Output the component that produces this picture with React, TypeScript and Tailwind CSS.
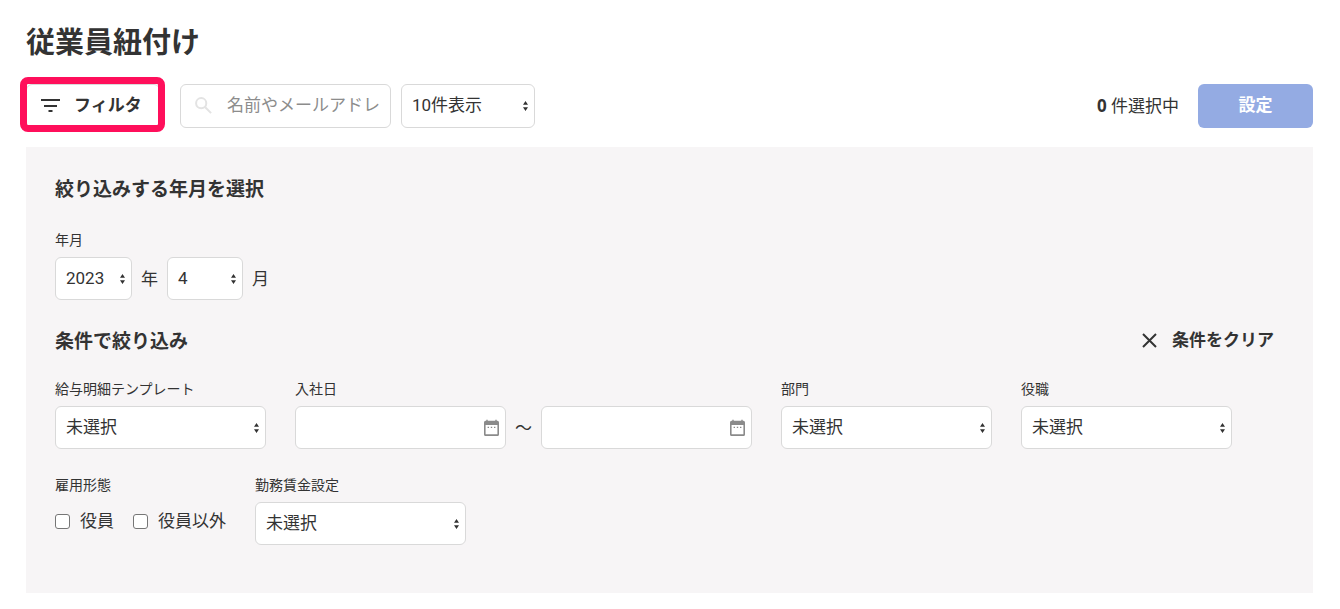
import { useState } from 'react';
import type { ReactNode } from 'react';
import clsx from 'clsx';

const controlClass = 'w-full rounded-md border border-[#d9d9d9] bg-white pb-0.5 text-[17px] text-[#333333]';

export default function App() {
  const [keyword, setKeyword] = useState('');

  return (
    <main className="pt-[25px] pr-[27px] pb-4 pl-[26px] font-['Roboto','Noto_Sans_CJK_JP',sans-serif] text-[17px] leading-6 text-[#333333]">
      <h1 className="text-[29px] leading-9 font-bold">従業員紐付け</h1>

      <div className="mt-[23px] flex items-center">
        <button
          type="button"
          className="relative flex h-11 w-[134px] items-center gap-3 rounded-md border border-[#d9d9d9] bg-white pb-0.5 pl-[11px] font-bold"
        >
          <FilterIcon />
          フィルタ
          {/* 強調枠 */}
          <span className="absolute -top-2 -right-1.5 -bottom-[5px] -left-[7px] rounded-lg border-[7px] border-[#ff0f5b]" />
        </button>

        <div className="relative ml-5 w-[211px]">
          <SearchIcon />
          <input
            type="text"
            aria-label="検索"
            placeholder="名前やメールアドレス"
            value={keyword}
            onChange={(e) => setKeyword(e.target.value)}
            className={clsx(controlClass, 'block h-11 pr-2.5 pl-[46px] placeholder:text-[#8c8c8c]')}
          />
        </div>

        <div className="ml-2.5 w-[134px]">
          <Select id="per-page" ariaLabel="表示件数" options={['10件表示', '50件表示', '100件表示']} tall />
        </div>

        <p className="ml-auto">
          <strong className="font-['Noto_Sans',sans-serif] font-bold">0</strong> 件選択中
        </p>
        <button type="button" className="ml-[19px] h-11 w-[115px] rounded-md bg-[#94abe3] pb-0.5 font-bold text-white">
          設定
        </button>
      </div>

      <section className="mt-[19px] bg-[#f7f5f6] px-[29px] pt-[29px] pb-12">
        <h2 className="text-[19px] leading-7 font-bold">絞り込みする年月を選択</h2>

        <div className="mt-[26px]">
          <Field label="年月" htmlFor="year">
            <div className="flex items-center gap-[9px]">
              <div className="w-[77px]">
                <Select id="year" options={['2023', '2022', '2021']} />
              </div>
              年
              <div className="w-[76px]">
                <Select id="month" ariaLabel="月" options={['4', '5', '6']} />
              </div>
              月
            </div>
          </Field>
        </div>

        <div className="mt-7 flex items-start justify-between">
          <h2 className="text-[19px] leading-7 font-bold">条件で絞り込み</h2>
          <button type="button" className="flex items-center gap-[15px] px-2.5 font-bold">
            <CloseIcon />
            条件をクリア
          </button>
        </div>

        <div className="mt-[23px] flex flex-wrap gap-x-[29px] gap-y-[26px]">
          <Field label="給与明細テンプレート" htmlFor="template">
            <div className="w-[211px]">
              <Select id="template" options={['未選択']} />
            </div>
          </Field>

          <Field label="入社日" htmlFor="joined-from">
            <div className="flex items-center">
              <DateInput id="joined-from" />
              <span className="w-[35px] text-center">～</span>
              <DateInput id="joined-to" ariaLabel="入社日（終了）" />
            </div>
          </Field>

          <Field label="部門" htmlFor="department">
            <div className="w-[211px]">
              <Select id="department" options={['未選択']} />
            </div>
          </Field>

          <Field label="役職" htmlFor="position">
            <div className="w-[211px]">
              <Select id="position" options={['未選択']} />
            </div>
          </Field>

          <fieldset>
            <legend className="text-[14px] leading-5">雇用形態</legend>
            <div className="mt-[14px] flex gap-[19px]">
              <Checkbox label="役員" />
              <Checkbox label="役員以外" />
            </div>
          </fieldset>

          <Field label="勤務賃金設定" htmlFor="wage">
            <div className="w-[211px]">
              <Select id="wage" options={['未選択']} />
            </div>
          </Field>
        </div>
      </section>
    </main>
  );
}

function Field({ label, htmlFor, children }: { label: string; htmlFor: string; children: ReactNode }) {
  return (
    <div>
      <label htmlFor={htmlFor} className="mb-[7px] block text-[14px] leading-5">{label}</label>
      {children}
    </div>
  );
}

interface SelectProps {
  id: string;
  options: string[];
  ariaLabel?: string;
  tall?: boolean;
}

function Select({ id, options, ariaLabel, tall = false }: SelectProps) {
  return (
    <div className="relative">
      <select
        id={id}
        aria-label={ariaLabel}
        className={clsx(controlClass, 'block appearance-none pr-5 pl-2.5', tall ? 'h-11' : 'h-[43px]')}
      >
        {options.map((option) => (
          <option key={option}>{option}</option>
        ))}
      </select>
      <svg
        viewBox="0 0 5 11"
        className="pointer-events-none absolute top-1/2 right-[7px] h-[11px] w-[5px] -translate-y-1/2"
        fill="#333333"
      >
        <path d="M2.5 0.5 5 4.2H0zM2.5 10.5 0 6.8h5z" />
      </svg>
    </div>
  );
}

function DateInput({ id, ariaLabel }: { id: string; ariaLabel?: string }) {
  return (
    <div className="relative w-[211px]">
      <input id={id} type="text" aria-label={ariaLabel} className={clsx(controlClass, 'block h-[43px] pr-9 pl-2.5')} />
      <svg
        viewBox="0 0 15 17"
        className="pointer-events-none absolute top-1/2 right-[7px] h-[17px] w-[15px] -translate-y-1/2"
        fill="#8a8a8a"
      >
        <path
          fillRule="evenodd"
          d="M2.3 0h1.4v1.3h7.6V0h1.4v1.3h.7A1.6 1.6 0 0 1 15 2.9v12a1.6 1.6 0 0 1-1.6 1.6H1.6A1.6 1.6 0 0 1 0 14.900V2.900a1.6 1.6 0 0 1 1.6-1.6h.7zM1.600 5.500v9.300h11.800V5.500z"
        />
        <path d="M3.6 7.200H5v1.400H3.6zM6.800 7.200h1.400v1.400H6.800zM10 7.200h1.400v1.400H10z" />
      </svg>
    </div>
  );
}

function Checkbox({ label }: { label: string }) {
  return (
    <label className="flex items-center gap-2.5">
      <input
        type="checkbox"
        className="size-[15px] appearance-none rounded-[3px] border border-[#767676] bg-white checked:bg-[#94abe3]"
      />
      {label}
    </label>
  );
}

function FilterIcon() {
  return (
    <svg viewBox="0 0 24 24" className="size-6" fill="#333333">
      <path d="M3 6h19v2H3zM6 12h13v2H6zM10.500 17h4v2h-4z" />
    </svg>
  );
}

function SearchIcon() {
  return (
    <svg viewBox="0 0 17 17" className="absolute top-[13px] left-[15px] size-[17px]" fill="none" stroke="#e3e3e3" strokeWidth="2">
      <circle cx="6.2" cy="6.2" r="5.1" />
      <path d="m10.2 10.2 5.9 5.9" />
    </svg>
  );
}

function CloseIcon() {
  return (
    <svg viewBox="0 0 15 15" className="size-[15px]" fill="none" stroke="#333333" strokeWidth="2">
      <path d="m1 1 13 13M14 1 1 14" />
    </svg>
  );
}
